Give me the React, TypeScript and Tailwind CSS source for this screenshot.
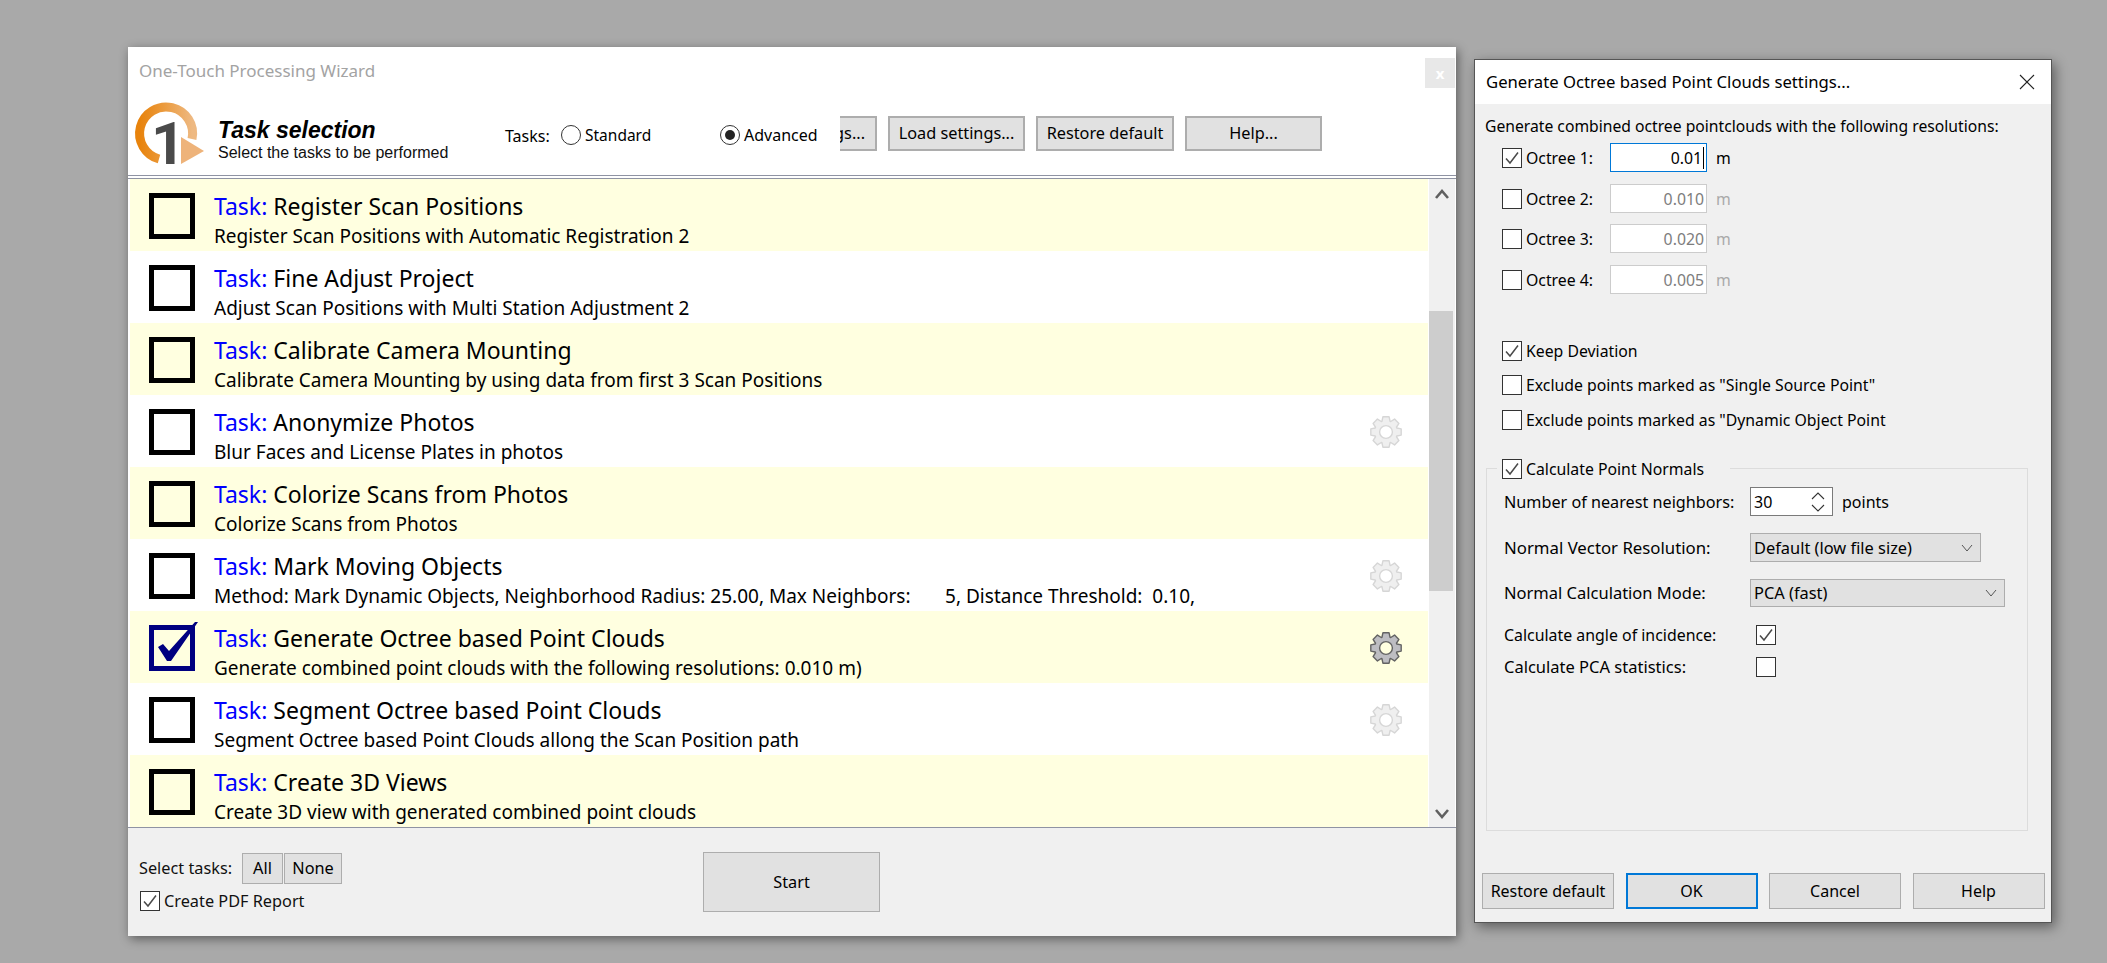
const tasks = [
  { title: 'Register Scan Positions', desc: 'Register Scan Positions with Automatic Registration 2' },
  { title: 'Fine Adjust Project', desc: 'Adjust Scan Positions with Multi Station Adjustment 2' },
  { title: 'Calibrate Camera Mounting', desc: 'Calibrate Camera Mounting by using data from first 3 Scan Positions' },
  { title: 'Anonymize Photos', desc: 'Blur Faces and License Plates in photos', gear: 'off' },
  { title: 'Colorize Scans from Photos', desc: 'Colorize Scans from Photos' },
  {
    title: 'Mark Moving Objects',
    desc: 'Method: Mark Dynamic Objects, Neighborhood Radius: 25.00, Max Neighbors:       5, Distance Threshold:  0.10,',
    gear: 'off',
  },
  {
    title: 'Generate Octree based Point Clouds',
    desc: 'Generate combined point clouds with the following resolutions: 0.010 m)',
    gear: 'on',
    checked: true,
  },
  { title: 'Segment Octree based Point Clouds', desc: 'Segment Octree based Point Clouds allong the Scan Position path', gear: 'off' },
  { title: 'Create 3D Views', desc: 'Create 3D view with generated combined point clouds' },
]

const octrees = [
  { label: 'Octree 1:', value: '0.01', on: true, mt: 'mt-[6px]' },
  { label: 'Octree 2:', value: '0.010', mt: 'mt-[12px]' },
  { label: 'Octree 3:', value: '0.020', mt: 'mt-[11px]' },
  { label: 'Octree 4:', value: '0.005', mt: 'mt-[12px]' },
]

function gearPath() {
  const pts: string[] = []
  for (let i = 0; i < 8; i++) {
    const a = (i * Math.PI) / 4 - Math.PI / 2
    const add = (r: number, d: number) => {
      const t = a + d
      pts.push(`${(16 + r * Math.cos(t)).toFixed(2)} ${(16 + r * Math.sin(t)).toFixed(2)}`)
    }
    add(11.5, -0.36)
    add(15.5, -0.2)
    add(15.5, 0.2)
    add(11.5, 0.36)
  }
  return 'M' + pts.join('L') + 'Z'
}

function Gear({ on }: { on: boolean }) {
  return (
    <svg width="32" height="32" viewBox="0 0 32 32">
      <path d={gearPath()} fill={on ? '#bdbdc2' : '#efefef'} stroke={on ? '#636363' : '#d6d6d6'} strokeWidth="1.4" strokeLinejoin="round" />
      <circle cx="16" cy="16" r="6.4" fill={on ? '#ffffe0' : '#ffffff'} stroke={on ? '#636363' : '#d6d6d6'} strokeWidth="1.4" />
    </svg>
  )
}

function Logo() {
  return (
    <svg width="69" height="61" viewBox="0 0 69 61" className="shrink-0 overflow-visible">
      <defs>
        <linearGradient id="ring" x1="0" y1="0" x2="1" y2="0">
          <stop offset="0" stopColor="#e8830c" />
          <stop offset="0.45" stopColor="#eb9a3c" />
          <stop offset="1" stopColor="#eeb982" />
        </linearGradient>
      </defs>
      <path d="M24 56 A26.5 26.5 0 1 1 57 36" fill="none" stroke="url(#ring)" strokeWidth="9" />
      <path d="M46 34 L69 48 L46 61 Z" fill="#eeb37a" />
      <text x="16" y="61" fontFamily="Roboto, sans-serif" fontWeight="700" fontSize="60" fill="#4a4a4a">
        1
      </text>
    </svg>
  )
}

function TaskBox({ checked }: { checked?: boolean }) {
  return (
    <div className={`relative h-[46px] w-[46px] shrink-0 border-[5px] ${checked ? 'border-[#000080]' : 'border-black'}`}>
      {checked && (
        <svg width="50" height="50" viewBox="0 0 50 50" className="absolute -left-[5px] -top-[9px]">
          <path d="M9 26 L14 23 L20 30 L46 1 L49 1 L22 40 L18 40 Z" fill="#000080" />
        </svg>
      )}
    </div>
  )
}

function Check({ on, className = '' }: { on?: boolean; className?: string }) {
  return (
    <div className={`flex h-5 w-5 shrink-0 items-center justify-center border border-[#333333] bg-white ${className}`}>
      {on && (
        <svg width="18" height="18" viewBox="0 0 18 18">
          <path d="M3 9.5 L7 14 L15 3.5" fill="none" stroke="#4a4a4a" strokeWidth="1.5" />
        </svg>
      )}
    </div>
  )
}

function Chevron({ up }: { up?: boolean }) {
  return (
    <svg width="14" height="10" viewBox="0 0 14 10">
      <path d={up ? 'M1 9 L7 2 L13 9' : 'M1 1 L7 8 L13 1'} fill="none" stroke="#606060" strokeWidth="2.6" />
    </svg>
  )
}

function SelectArrow() {
  return (
    <svg width="12" height="8" viewBox="0 0 12 8">
      <path d="M1 1 L6 7 L11 1" fill="none" stroke="#555555" strokeWidth="1" />
    </svg>
  )
}

function GrayButton({ label, className = '' }: { label: string; className?: string }) {
  return (
    <button className={`flex items-center justify-center border-2 border-[#adadad] bg-[#e1e1e1] text-black ${className}`}>{label}</button>
  )
}

function WizardWindow() {
  return (
    <div className="absolute left-[128px] top-[47px] flex h-[889px] w-[1328px] flex-col bg-white font-['Noto_Sans',sans-serif] shadow-[2px_3px_10px_rgba(0,0,0,0.45)]">
      <div className="flex h-[48px] shrink-0 items-start">
        <span className="ml-[11px] mt-[11px] text-[17px] leading-[26px] text-[#a3a3a3]">One-Touch Processing Wizard</span>
        <div className="ml-auto mr-[1px] mt-[11px] flex h-[30px] w-[30px] items-center justify-center bg-[#e8e8e8] text-[15px] font-bold leading-none text-white">
          x
        </div>
      </div>

      <div className="flex h-[80px] shrink-0 items-start">
        <div className="ml-[7px] mt-[8px]">
          <Logo />
        </div>
        <div className="ml-[14px] mt-[21px] w-[287px] shrink-0">
          <div className="font-['Liberation_Sans',sans-serif] text-[23px] font-bold italic leading-[28px] text-black">Task selection</div>
          <div className="mt-[-1px] font-['Liberation_Sans',sans-serif] text-[16px] leading-[20px] text-[#111111]">Select the tasks to be performed</div>
        </div>
        <div className="mt-[26px] flex items-center text-[16px] leading-[24px] text-black">
          <span className="mt-[3px] w-[56px]">Tasks:</span>
          <span className="h-5 w-5 rounded-full border border-[#333333] bg-white" />
          <span className="ml-[4px] w-[135px] text-[15.5px]">Standard</span>
          <span className="flex h-5 w-5 items-center justify-center rounded-full border border-[#333333] bg-white">
            <span className="h-[10px] w-[10px] rounded-full bg-[#222222]" />
          </span>
          <span className="ml-[4px]">Advanced</span>
        </div>
        <div className="ml-auto mr-[134px] mt-[21px] flex gap-[11px] text-[16.3px]">
          <div className="flex h-[35px] w-[37px] items-center justify-end overflow-hidden whitespace-nowrap border-y-2 border-r-2 border-[#adadad] bg-[#e1e1e1] pr-[10px] text-black">
            gs...
          </div>
          <GrayButton label="Load settings..." className="h-[35px] w-[137px]" />
          <GrayButton label="Restore default" className="h-[35px] w-[138px]" />
          <GrayButton label="Help..." className="h-[35px] w-[137px]" />
        </div>
      </div>

      <div className="h-1 shrink-0 border-y border-[#8f93a3] bg-white" />

      <div className="flex h-[648px] shrink-0 pl-[2px]">
        <div className="w-[1298px] shrink-0">
          {tasks.map((t, i) => (
            <div key={t.title} className={`flex h-[72px] items-start ${i % 2 === 0 ? 'bg-[#ffffe0]' : 'bg-white'}`}>
              <div className="ml-[19px] mt-[14px]">
                <TaskBox checked={t.checked} />
              </div>
              <div className="ml-[19px] min-w-0 flex-1 pt-[12px]">
                <div className="text-[23px] leading-[30px] text-black">
                  <span className="text-[#0000ff]">Task:</span> {t.title}
                </div>
                <div className="mt-[3px] whitespace-pre text-[19px] leading-[24px] text-black">{t.desc}</div>
              </div>
              {t.gear && (
                <div className="mr-[26px] mt-[21px]">
                  <Gear on={t.gear === 'on'} />
                </div>
              )}
            </div>
          ))}
        </div>
        <div className="ml-[1px] flex w-[26px] shrink-0 flex-col bg-[#f0f0f0]">
          <div className="flex h-[132px] justify-center pt-[10px]">
            <Chevron up />
          </div>
          <div className="h-[280px] w-[24px] bg-[#cdcdcd]" />
          <div className="flex flex-1 items-end justify-center pb-[8px]">
            <Chevron />
          </div>
        </div>
      </div>

      <div className="flex flex-1 items-start border-t border-[#8f93a3] bg-[#f0f0f0] text-[16.3px] text-[#111111]">
        <div className="ml-[11px] mt-[25px] w-[400px] shrink-0">
          <div className="flex items-center">
            <span className="w-[103px] whitespace-nowrap">Select tasks:</span>
            <GrayButton label="All" className="h-[31px] w-[41px] border!" />
            <GrayButton label="None" className="ml-px h-[31px] w-[58px] border!" />
          </div>
          <div className="mt-[7px] flex h-5 items-center">
            <div className="ml-px">
              <Check on />
            </div>
            <span className="ml-[4px]">Create PDF Report</span>
          </div>
        </div>
        <GrayButton label="Start" className="ml-[164px] mt-[24px] h-[60px] w-[177px] border!" />
      </div>
    </div>
  )
}

function SettingsDialog() {
  return (
    <div className="absolute left-[1474px] top-[59px] flex h-[864px] w-[578px] flex-col border border-[#555555] bg-[#f0f0f0] font-['Noto_Sans',sans-serif] text-[15.8px] leading-[22px] text-black shadow-[3px_4px_12px_rgba(0,0,0,0.45)]">
      <div className="flex h-[44px] shrink-0 items-center bg-white pl-[11px] pr-[16px]">
        <span className="text-[16.7px]">Generate Octree based Point Clouds settings...</span>
        <svg width="16" height="16" viewBox="0 0 16 16" className="ml-auto">
          <path d="M1 1 L15 15 M15 1 L1 15" stroke="#222222" strokeWidth="1.1" />
        </svg>
      </div>

      <div className="flex flex-1 flex-col pl-[10px]">
        <div className="mt-[11px] whitespace-nowrap text-[15.7px]">Generate combined octree pointclouds with the following resolutions:</div>
        {octrees.map((o) => (
          <div key={o.label} className={`ml-[17px] flex h-[29px] items-center ${o.mt}`}>
            <Check on={o.on} />
            <span className="ml-[4px] w-[84px]">{o.label}</span>
            <div
              className={`flex h-[29px] w-[97px] items-center justify-end bg-white pr-[2px] ${
                o.on ? 'border border-[#0078d7] text-black' : 'border border-[#cccccc] text-[#7d7d7d]'
              }`}
            >
              {o.value}
              {o.on && <span className="ml-px h-[22px] w-px bg-black" />}
            </div>
            <span className={`ml-[9px] ${o.on ? 'text-black' : 'text-[#aaaaaa]'}`}>m</span>
          </div>
        ))}

        <div className="ml-[17px] mt-[47px] flex h-5 items-center">
          <Check on />
          <span className="ml-[4px]">Keep Deviation</span>
        </div>
        <div className="ml-[17px] mt-[14px] flex h-5 items-center">
          <Check />
          <span className="ml-[4px]">Exclude points marked as "Single Source Point"</span>
        </div>
        <div className="ml-[17px] mt-[15px] flex h-5 items-center">
          <Check />
          <span className="ml-[4px]">Exclude points marked as "Dynamic Object Point</span>
        </div>

        <div className="relative ml-px mr-[23px] mt-[38px] h-[363px] border border-[#dcdcdc]">
          <div className="absolute -top-[10px] left-[10px] flex h-5 items-center bg-[#f0f0f0] pl-[5px] pr-[26px]">
            <Check on />
            <span className="ml-[4px]">Calculate Point Normals</span>
          </div>
          <div className="ml-[17px] mt-[18px] flex h-[29px] items-center">
            <span className="w-[246px] whitespace-nowrap text-[16.2px]">Number of nearest neighbors:</span>
            <div className="flex h-[29px] w-[83px] items-center justify-between border border-[#7a7a7a] bg-white pl-[3px] pr-[7px] text-[16px]">
              <span>30</span>
              <svg width="14" height="22" viewBox="0 0 14 22">
                <path d="M1 8 L7 2 L13 8 M1 14 L7 20 L13 14" fill="none" stroke="#333333" strokeWidth="1.1" />
              </svg>
            </div>
            <span className="ml-[9px] text-[16px]">points</span>
          </div>
          <div className="ml-[17px] mt-[17px] flex h-[29px] items-center">
            <span className="w-[246px] whitespace-nowrap text-[16.8px]">Normal Vector Resolution:</span>
            <div className="flex h-[29px] w-[231px] items-center justify-between border border-[#adadad] bg-[#e1e1e1] pl-[3px] pr-[7px] text-[16.4px]">
              <span>Default (low file size)</span>
              <SelectArrow />
            </div>
          </div>
          <div className="ml-[17px] mt-[17px] flex h-[28px] items-center">
            <span className="w-[246px] whitespace-nowrap text-[16.5px]">Normal Calculation Mode:</span>
            <div className="flex h-[28px] w-[255px] items-center justify-between border border-[#adadad] bg-[#e1e1e1] pl-[3px] pr-[7px] text-[16.4px]">
              <span>PCA (fast)</span>
              <SelectArrow />
            </div>
          </div>
          <div className="ml-[17px] mt-[18px] flex h-5 items-center">
            <span className="w-[252px] whitespace-nowrap text-[15.9px]">Calculate angle of incidence:</span>
            <Check on />
          </div>
          <div className="ml-[17px] mt-[12px] flex h-5 items-center">
            <span className="w-[252px] whitespace-nowrap text-[16.5px]">Calculate PCA statistics:</span>
            <Check />
          </div>
        </div>

        <div className="ml-[-3px] mt-[42px] flex gap-[11.5px] text-[16px]">
          {['Restore default', 'OK', 'Cancel', 'Help'].map((b) => (
            <GrayButton
              key={b}
              label={b}
              className={`h-[36px] w-[132px] ${b === 'OK' ? 'border-[#0078d7]!' : 'border!'}`}
            />
          ))}
        </div>
      </div>
    </div>
  )
}

export default function App() {
  return (
    <div className="relative h-[963px] w-[2107px] overflow-hidden bg-[#a9a9a9]">
      <WizardWindow />
      <SettingsDialog />
    </div>
  )
}
